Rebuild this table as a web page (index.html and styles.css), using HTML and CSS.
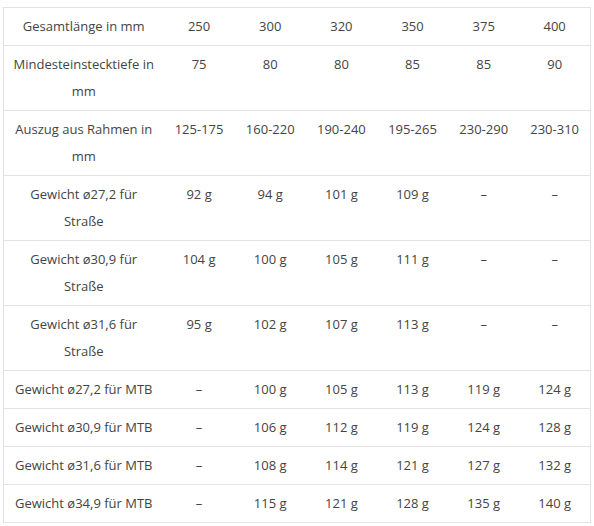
FILE: index.html
```html
<!DOCTYPE html>
<html lang="de">
<head>
<meta charset="utf-8">
<link rel="stylesheet" href="styles.css">
</head>
<body>
<div class="wrap">
<table class="spec">
<colgroup><col class="c-label"><col><col><col><col><col><col></colgroup>
<tbody>
<tr><td>Gesamtlänge in mm</td><td>250</td><td>300</td><td>320</td><td>350</td><td>375</td><td>400</td></tr>
<tr><td>Mindesteinstecktiefe in mm</td><td>75</td><td>80</td><td>80</td><td>85</td><td>85</td><td>90</td></tr>
<tr><td>Auszug aus Rahmen in mm</td><td>125-175</td><td>160-220</td><td>190-240</td><td>195-265</td><td>230-290</td><td>230-310</td></tr>
<tr><td>Gewicht ø27,2 für Straße</td><td>92 g</td><td>94 g</td><td>101 g</td><td>109 g</td><td>–</td><td>–</td></tr>
<tr><td>Gewicht ø30,9 für Straße</td><td>104 g</td><td>100 g</td><td>105 g</td><td>111 g</td><td>–</td><td>–</td></tr>
<tr><td>Gewicht ø31,6 für Straße</td><td>95 g</td><td>102 g</td><td>107 g</td><td>113 g</td><td>–</td><td>–</td></tr>
<tr><td>Gewicht ø27,2 für MTB</td><td>–</td><td>100 g</td><td>105 g</td><td>113 g</td><td>119 g</td><td>124 g</td></tr>
<tr><td>Gewicht ø30,9 für MTB</td><td>–</td><td>106 g</td><td>112 g</td><td>119 g</td><td>124 g</td><td>128 g</td></tr>
<tr><td>Gewicht ø31,6 für MTB</td><td>–</td><td>108 g</td><td>114 g</td><td>121 g</td><td>127 g</td><td>132 g</td></tr>
<tr><td>Gewicht ø34,9 für MTB</td><td>–</td><td>115 g</td><td>121 g</td><td>128 g</td><td>135 g</td><td>140 g</td></tr>
</tbody>
</table>
</div>
</body>
</html>
```
FILE: styles.css
```css
html, body {
  margin: 0;
  padding: 0;
  background: #ffffff;
}
.wrap {
  padding: 7px 0 0 3px;
}
.spec {
  width: 588px;
  border-collapse: collapse;
  table-layout: fixed;
  font-family: "Open Sans", "Noto Sans", sans-serif;
  font-size: 13px;
  color: #444444;
}
.c-label {
  width: 160px;
}
.spec td {
  border-top: 1px solid #e3e3e3;
  border-bottom: 1px solid #e3e3e3;
  padding: 5px 8px;
  line-height: 27px;
  text-align: center;
  vertical-align: top;
}
.spec td:first-child {
  border-left: 1px solid #e3e3e3;
}
.spec td:last-child {
  border-right: 1px solid #e3e3e3;
}
```
